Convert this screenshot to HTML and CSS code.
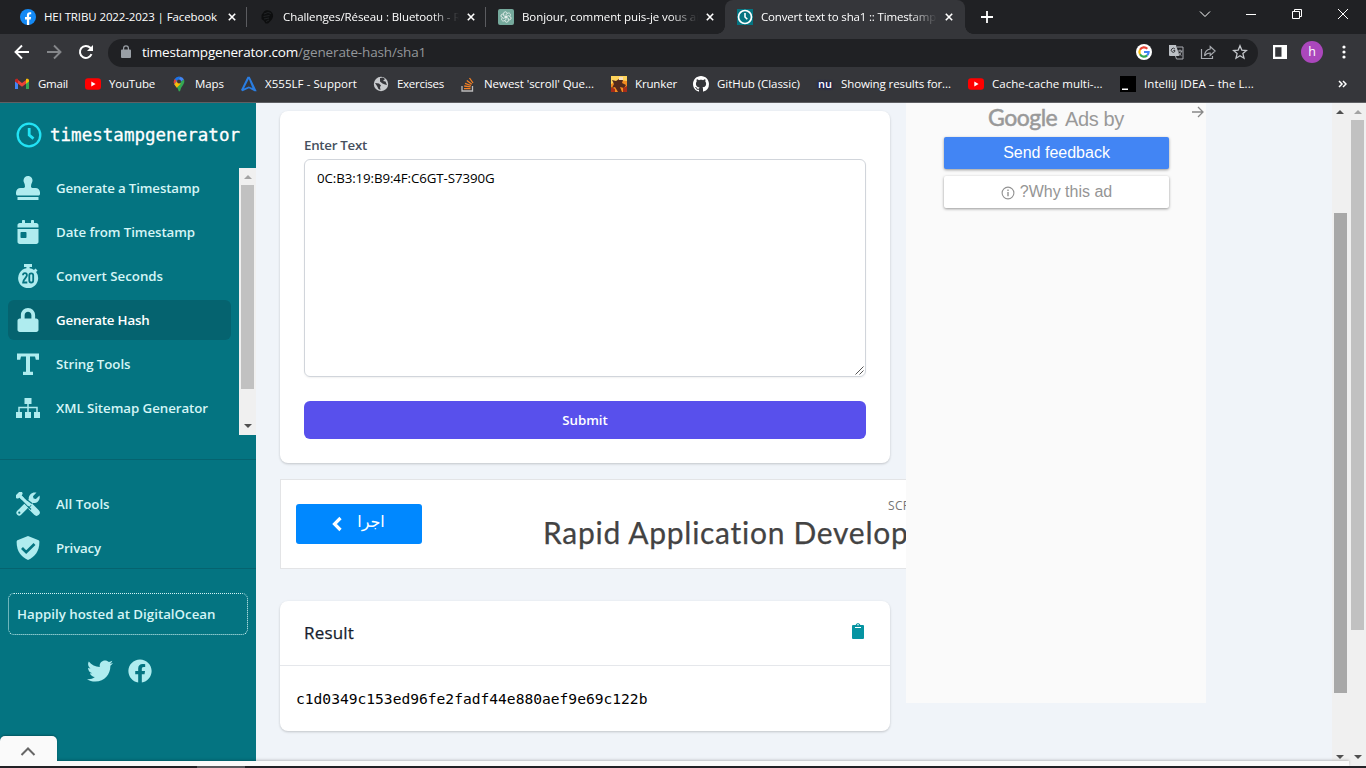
FILE: index.html
```html
<!DOCTYPE html>
<html lang="en">
<head>
<meta charset="utf-8">
<title>Convert text to sha1 :: Timestamp Generator</title>
<link rel="stylesheet" href="styles.css">
</head>
<body>
<div class="chrome">
  <div class="tabs">
    <div class="tab">
      <svg class="fav" viewBox="0 0 16 16"><circle cx="8" cy="8" r="8" fill="#1489f4"/><path d="M6.9 16v-5.5H5V8.1h1.9V6.5c0-2.1 1.1-3.2 3-3.2.7 0 1.3.1 1.3.1v1.9h-.9c-.9 0-1.2.5-1.2 1.2v1.6h2l-.4 2.4H9.200V16z" fill="#fff"/></svg>
      <span class="tab-title t-fb">HEI TRIBU 2022-2023 | Facebook</span>
      <svg class="x" viewBox="0 0 8 8"><path d="M.8.8l6.400 6.400M7.200.8L.8 7.200"/></svg>
    </div>
    <div class="tab">
      <svg class="fav" viewBox="0 0 16 16"><path d="M5 2.500C7 .8 11 .8 13 3.500s1 6-1 8l-3 3H6.500L5 12 2.500 10V6z" fill="#0d0e0f"/><path d="M5 5l4-1.500 3 1M4.500 7.500l6-1M5 10l5-1M7 12.500l3-1.500" stroke="#26282b" fill="none" stroke-width=".8"/></svg>
      <span class="tab-title t-ch fade">Challenges/Réseau : Bluetooth - Root Me</span>
      <svg class="x" viewBox="0 0 8 8"><path d="M.8.8l6.400 6.400M7.200.8L.8 7.200"/></svg>
    </div>
    <div class="tab last">
      <svg class="fav" viewBox="0 0 16 16"><rect width="16" height="16" rx="2" fill="#75a99c"/><g fill="none" stroke="#fff" stroke-width=".8" transform="translate(1.200 1.200) scale(.85)"><path id="p" d="M8 8.200V4.800l2.600-1.500c2.200-.4 3.300 1.800 2.200 3.400"/><use href="#p" transform="rotate(60 8 8)"/><use href="#p" transform="rotate(120 8 8)"/><use href="#p" transform="rotate(180 8 8)"/><use href="#p" transform="rotate(240 8 8)"/><use href="#p" transform="rotate(300 8 8)"/></g></svg>
      <span class="tab-title t-bo fade">Bonjour, comment puis-je vous aider</span>
      <svg class="x" viewBox="0 0 8 8"><path d="M.8.8l6.400 6.400M7.200.8L.8 7.200"/></svg>
    </div>
    <div class="tab active">
      <svg class="fav" viewBox="0 0 16 16"><rect width="16" height="16" fill="#047481"/><circle cx="8" cy="8" r="6.500" fill="none" stroke="#fff" stroke-width="1.700"/><path d="M8 4v4l2.300 2.300" fill="none" stroke="#fff" stroke-width="1.600"/></svg>
      <span class="tab-title t-ts fade">Convert text to sha1 :: Timestamp Generator</span>
      <svg class="x" viewBox="0 0 8 8"><path d="M.8.8l6.400 6.400M7.200.8L.8 7.200"/></svg>
    </div>
    <svg class="plus" viewBox="0 0 12 12"><path d="M6 0v12M0 6h12" stroke="#fff" stroke-width="1.800"/></svg>
    <div class="window-buttons">
      <svg width="12" height="12" viewBox="0 0 12 12"><path d="M1 3.500l5 5 5-5"/></svg>
      <svg width="12" height="12" viewBox="0 0 12 12"><path d="M1 6.500h10"/></svg>
      <svg width="12" height="12" viewBox="0 0 12 12"><path d="M1.500 3.500h7v7h-7zM3.500 3.500v-2h7v7h-2"/></svg>
      <svg width="12" height="12" viewBox="0 0 12 12"><path d="M1 1l10 10M11 1L1 11"/></svg>
    </div>
  </div>

  <div class="toolbar">
    <div class="nav-buttons">
      <svg width="16" height="16" viewBox="0 0 16 16"><path d="M15 8H2M8 1.500L1.500 8 8 14.500" fill="none" stroke="#fff" stroke-width="1.900"/></svg>
      <svg width="16" height="16" viewBox="0 0 16 16"><path d="M1 8h13M8 1.500L14.500 8 8 14.500" fill="none" stroke="#85878a" stroke-width="1.900"/></svg>
      <svg width="16" height="16" viewBox="0 0 16 16"><path d="M13.500 10.200A6 6 0 1 1 12.300 3.800L14 5.500" fill="none" stroke="#fff" stroke-width="2"/><path d="M15 1v6H9z" fill="#fff"/></svg>
    </div>
    <div class="omnibox">
      <svg class="lock" viewBox="0 0 10 13"><path d="M9 4.500H8V3.200a3 3 0 0 0-6 0v1.300H1a1 1 0 0 0-1 1V12a1 1 0 0 0 1 1h8a1 1 0 0 0 1-1V5.500a1 1 0 0 0-1-1zM3.200 3.200a1.800 1.800 0 0 1 3.600 0v1.300H3.200z" fill="#9aa0a6"/></svg>
      <span class="url"><span class="host">timestampgenerator.com</span><span class="path">/generate-hash/sha1</span></span>
      <div class="omni-icons">
        <svg width="16" height="16" viewBox="0 0 16 16"><circle cx="8" cy="8" r="8" fill="#fff"/><g fill="none" stroke-width="2.200"><path d="M4 5.700A4.600 4.600 0 0 1 11.300 4.700" stroke="#ea4335"/><path d="M4 10.300a4.600 4.600 0 0 1 0-4.600" stroke="#fbbc05"/><path d="M11.100 11.400A4.600 4.600 0 0 1 4 10.300" stroke="#34a853"/><path d="M8 8h4.600a4.600 4.600 0 0 1-1.500 3.400" stroke="#4285f4"/></g></svg>
        <svg width="16" height="16" viewBox="0 0 16 16"><path d="M1 1h7l3.500 11H2a1 1 0 0 1-1-1z" fill="#bdc1c6"/><path d="M7 5.200A2 2 0 1 0 7 7.300V6.600H5.300" fill="none" stroke="#35363a" stroke-width="1"/><path d="M9 3h6v12H8.500l-1-3M9.500 7h5M12 5.500V7m1.500 0c-.5 2-1.500 3.500-3 4.500m0-3c.8 1.200 1.800 2.300 3 3.200" fill="none" stroke="#a8abb0" stroke-width="1"/></svg>
        <svg width="16" height="16" viewBox="0 0 16 16"><path d="M1.500 5v9.500h11V12M10.200 2.500l5 4.500-5 4.500V9C7.500 9 5.800 9.800 4.500 11.800 4.800 8 6.500 5.500 10.200 5z" fill="none" stroke="#a8abb0" stroke-width="1.200"/></svg>
        <svg width="16" height="16" viewBox="0 0 16 16"><path d="M8 1.800l1.800 4.300 4.700.4-3.600 3.100 1.100 4.600L8 11.800l-4 2.400 1.100-4.600L1.500 6.500l4.700-.4z" fill="none" stroke="#c4c7cb" stroke-width="1.300"/></svg>
      </div>
    </div>
    <svg class="panel" viewBox="0 0 14 14"><path d="M0 0h14v14H0zM2.200 2.200v9.600H8.500V2.200z" fill="#fff" fill-rule="evenodd"/></svg>
    <div class="avatar">h</div>
    <svg class="dots" viewBox="0 0 4 14"><circle cx="2" cy="2" r="1.600"/><circle cx="2" cy="7" r="1.600"/><circle cx="2" cy="12" r="1.600"/></svg>
  </div>

  <div class="bookmarks">
    <div class="bm gmail"><svg viewBox="0 0 16 16"><path d="M1 3.500v9.500h3V6z" fill="#4285f4"/><path d="M15 3.500v9.500h-3V6z" fill="#34a853"/><path d="M4 4v3.800l4 3 4-3V4L8 7z" fill="#ea4335"/><path d="M1 4.500C1 2.500 3 2.300 4 3v4.800L1 5.600z" fill="#c5221f"/><path d="M15 4.500c0-2-2-2.200-3-1.500v4.800l3-2.200z" fill="#fbbc04"/></svg><span>Gmail</span></div>
    <div class="bm yt"><svg viewBox="0 0 16 16"><rect y="2.200" width="16" height="11.600" rx="3" fill="#f00"/><path d="M6.300 5.500v5l4.300-2.500z" fill="#fff"/></svg><span>YouTube</span></div>
    <div class="bm maps"><svg viewBox="0 0 16 16"><path d="M3.600 3A5.500 5.500 0 0 1 9.500.700L4 7.500z" fill="#1a73e8"/><path d="M3.600 3L6 5 3.300 8.300A5.500 5.500 0 0 1 3.600 3z" fill="#ea4335"/><path d="M9.500.7A5.500 5.500 0 0 1 13 3.500L4.500 10 3.300 8.300z" fill="#4285f4"/><path d="M13 3.500c1.500 4.500-2.500 6-3.600 10.500-.4 1.800-1.800 2-2 .3C7 12 5.500 11 4.300 9.700z" fill="#34a853"/><path d="M3.300 8.300L6.500 4.700l3.200 3-4 4z" fill="#fbbc04"/><circle cx="8" cy="5.500" r="2" fill="#35363a"/></svg><span>Maps</span></div>
    <div class="bm asus"><svg viewBox="0 0 16 16"><path d="M6.500.8h2.200l7 14.400h-2.200L8 12.200 1.500 15.200 0 14zM7.800 3L3 12.600l4.800-2.200 3.600 1.600z" fill="#2a7de1" fill-rule="evenodd"/></svg><span>X555LF - Support</span></div>
    <div class="bm ex"><svg viewBox="0 0 16 16"><circle cx="8" cy="8" r="7.200" fill="#c8cacd"/><path d="M2 7l4 .5 2 2-1 1.500.5 3-2-1L4 10zM7 2l3-.5 2 1.500-2 2 2.500.5L14 9l-2-.5-2.500-1L7 5.500z" fill="#35363a"/></svg><span>Exercises</span></div>
    <div class="bm so"><svg viewBox="0 0 16 16"><path d="M2 10v5h10.500v-5" fill="none" stroke="#bcbbbb" stroke-width="1.300"/><path d="M4 12.700h6.500M4.200 10l6.400.9M5 7.300l6 2.200M6.800 4.500l5 3.700M9.500 2l3.500 5" stroke="#f48024" stroke-width="1.300"/></svg><span>Newest 'scroll' Que...</span></div>
    <div class="bm kr"><svg viewBox="0 0 16 16"><path d="M0 0h16v16H0z" fill="#f28c20"/><path d="M0 0h16v5L9 4 0 8z" fill="#ffd45b"/><path d="M1 4l4 1 3-2 4 1-1 3 4 2-2 3-4-1 2 5H7l-3-5-3 1 2-4z" fill="#51291d"/><path d="M8 1h4v3H8z" fill="#f7e0bd"/><path d="M0 11l4 2v3H0zM12 12l4-2v6h-4z" fill="#a72d18"/></svg><span>Krunker</span></div>
    <div class="bm gh"><svg viewBox="0 0 16 16"><path fill="#fff" d="M8 0C3.580 0 0 3.580 0 8c0 3.540 2.290 6.530 5.470 7.590.4.070.55-.17.55-.38 0-.19-.01-.82-.01-1.490-2.010.37-2.530-.49-2.690-.94-.09-.23-.48-.94-.82-1.130-.28-.15-.68-.52-.01-.53.63-.01 1.080.58 1.230.82.72 1.210 1.870.87 2.330.66.07-.52.28-.87.51-1.070-1.780-.2-3.640-.89-3.640-3.950 0-.87.31-1.590.82-2.150-.08-.2-.36-1.020.08-2.120 0 0 .67-.21 2.200.82.64-.18 1.320-.27 2-.27s1.360.09 2 .27c1.530-1.040 2.200-.82 2.200-.82.44 1.100.16 1.920.08 2.120.51.56.82 1.270.82 2.150 0 3.070-1.870 3.750-3.650 3.950.29.25.54.73.54 1.480 0 1.070-.01 1.930-.01 2.200 0 .21.15.46.55.38A8.013 8.013 0 0 0 16 8c0-4.420-3.580-8-8-8z"/></svg><span>GitHub (Classic)</span></div>
    <div class="bm nu"><b>nu</b><span>Showing results for...</span></div>
    <div class="bm cc"><svg viewBox="0 0 16 16"><rect y="2.200" width="16" height="11.600" rx="3" fill="#f00"/><path d="M6.300 5.500v5l4.300-2.500z" fill="#fff"/></svg><span>Cache-cache multi-...</span></div>
    <div class="bm ij"><svg viewBox="0 0 16 16"><path d="M0 0h16v16H0z"/><path d="M2 12.500h6V14H2z" fill="#fff"/></svg><span>IntelliJ IDEA – the L...</span></div>
    <svg class="more" viewBox="0 0 9 8"><path d="M1 1l3 3-3 3M5 1l3 3-3 3" fill="none" stroke="#fff" stroke-width="1.500"/></svg>
  </div>
</div>

<div class="view">
  <div class="frame">
    <div class="app">
      <aside class="sidebar">
        <div class="logo">
          <svg viewBox="0 0 26 26"><g fill="none" stroke="#22e3f5"><circle cx="13" cy="13" r="11.300" stroke-width="2.300"/><path d="M13.200 6v7l4.300 3.600" stroke-width="2.800"/></g></svg>
          <span>timestampgenerator</span>
        </div>
        <div class="nav-scroll">
          <nav>
            <a class="item a1"><svg viewBox="0 0 512 512"><path d="M32 512h448v-64H32v64zm384-256h-66.560c-16.260 0-29.440-13.180-29.440-29.440v-9.460c0-27.370 8.880-53.410 21.460-77.720 9.110-17.610 12.900-38.390 9.050-60.420-6.770-38.780-38.470-70.700-77.260-77.450C212.620-9.040 160 37.330 160 96c0 14.160 3.120 27.540 8.690 39.580C182.020 164.430 192 194.700 192 226.490v.07c0 16.260-13.180 29.440-29.440 29.440H96c-53.020 0-96 42.980-96 96v32c0 17.670 14.330 32 32 32h448c17.670 0 32-14.330 32-32v-32c0-53.020-42.980-96-96-96z"/></svg>Generate a Timestamp</a>
            <a class="item a2"><svg viewBox="0 0 448 512"><path fill-rule="evenodd" d="M0 464c0 26.500 21.500 48 48 48h352c26.500 0 48-21.500 48-48V192H0v272zm64-192c0-8.800 7.200-16 16-16h96c8.800 0 16 7.200 16 16v96c0 8.800-7.200 16-16 16H80c-8.800 0-16-7.200-16-16v-96zM400 64h-48V16c0-8.800-7.200-16-16-16h-32c-8.800 0-16 7.200-16 16v48H160V16c0-8.800-7.200-16-16-16h-32c-8.800 0-16 7.200-16 16v48H48C21.500 64 0 85.500 0 112v48h448v-48c0-26.500-21.500-48-48-48z"/></svg>Date from Timestamp</a>
            <a class="item a3"><svg viewBox="0 0 24 24"><path d="M8 0h8v3h-2.400v1.300A10 10 0 0 1 18 6l1.500-1.500 2 2-1.400 1.600A10 10 0 1 1 10.400 4.300V3H8z"/><path d="M7 11.300c0-2.800 3.900-2.800 3.900 0 0 2.200-3.800 3.700-3.800 7.200h4.200M13.300 11.300c0-2.700 3.900-2.700 3.900 0v5.200c0 2.700-3.900 2.700-3.900 0z" fill="none" stroke="#047481" stroke-width="1.800"/></svg>Convert Seconds</a>
            <a class="item a4 current"><svg viewBox="0 0 448 512"><path d="M400 224h-24v-72C376 68.200 307.800 0 224 0S72 68.200 72 152v72H48c-26.500 0-48 21.500-48 48v192c0 26.500 21.500 48 48 48h352c26.500 0 48-21.500 48-48V272c0-26.500-21.500-48-48-48zm-104 0H152v-72c0-39.700 32.300-72 72-72s72 32.300 72 72v72z"/></svg>Generate Hash</a>
            <a class="item a5"><svg viewBox="0 0 24 24"><path d="M1 1.500h22v6.200h-3.200L19 4.500h-5v15.200h3V23H7v-3.300h3V4.500H5l-.8 3.200H1z"/></svg>String Tools</a>
            <a class="item a6"><svg viewBox="0 0 24 24"><path d="M8.500 2h7v6h-7zM0 16h6v6H0zM9 16h6v6H9zM18 16h6v6h-6z"/><path d="M12 8v8M3 16v-4.500h18V16" fill="none" stroke="#afecef" stroke-width="1.500"/></svg>XML Sitemap Generator</a>
          </nav>
          <div class="bar light"><i class="up pale"></i><i class="thumb"></i><i class="down"></i></div>
        </div>
        <nav class="second">
          <a class="item a7"><svg viewBox="0 0 24 24"><path d="M1.500 4.500L4.500 1.500" stroke-width="4" stroke="#afecef" stroke-linecap="round"/><path d="M4 4l8.500 8.500" stroke="#afecef" stroke-width="3"/><path d="M14.800 14.800l5.700 5.700" stroke="#afecef" stroke-width="6.500" stroke-linecap="round"/><path d="M2.900 21.100L13 11" stroke="#047481" stroke-width="7"/><path d="M3.200 20.800L15 9" stroke="#afecef" stroke-width="5.500" stroke-linecap="round"/><path d="M20.500.6L17 4.200l.6 2.300 2.300.6L23.500 3.500c1.200 4.800-3 8.600-7.600 7.300L13 8.200C11.700 3.500 15.700-.6 20.500.6z"/><circle cx="3.300" cy="20.700" r="1.100" fill="#047481"/><path d="M5.500 8L15 17.500M8 5.500l8 6" stroke="#047481" stroke-width="1.200"/><path d="M4 4l9 9" stroke="#afecef" stroke-width="3"/></svg>All Tools</a>
          <a class="item a8"><svg viewBox="0 0 24 24"><path d="M12 0l10 4.100c.9.400 1.400 1.100 1.400 2C23.400 15 19 21 12 24 5.500 21.500.6 15.500.6 6.100c0-.9.5-1.600 1.400-2z"/><path d="M6 12l4.200 4.200L18.500 8" fill="none" stroke="#047481" stroke-width="2.700"/></svg>Privacy</a>
        </nav>
        <a class="hosted">Happily hosted at DigitalOcean</a>
        <div class="social">
          <svg width="26" height="26" viewBox="0 0 512 512"><path d="M459.370 151.716c.325 4.548.325 9.097.325 13.645 0 138.720-105.583 298.558-298.558 298.558-59.452 0-114.680-17.219-161.137-47.106 8.447.974 16.568 1.299 25.340 1.299 49.055 0 94.213-16.568 130.274-44.832-46.132-.975-84.792-31.188-98.112-72.772 6.498.974 12.995 1.624 19.818 1.624 9.421 0 18.843-1.300 27.614-3.573-48.081-9.747-84.143-51.980-84.143-102.985v-1.299c13.969 7.797 30.214 12.670 47.431 13.319-28.264-18.843-46.781-51.005-46.781-87.391 0-19.492 5.197-37.360 14.294-52.954 51.655 63.675 129.300 105.258 216.365 109.807-1.624-7.797-2.599-15.918-2.599-24.040 0-57.828 46.782-104.934 104.934-104.934 30.213 0 57.502 12.670 76.670 33.137 23.715-4.548 46.456-13.320 66.599-25.340-7.798 24.366-24.366 44.833-46.132 57.827 21.117-2.273 41.584-8.122 60.426-16.243-14.292 20.791-32.161 39.308-52.628 54.253z"/></svg>
          <svg width="24" height="24" viewBox="0 0 512 512"><path d="M504 256C504 119 393 8 256 8S8 119 8 256c0 123.780 90.690 226.380 209.250 245V327.690h-63V256h63v-54.640c0-62.150 37-96.480 93.670-96.480 27.140 0 55.520 4.840 55.520 4.840v61h-31.280c-30.800 0-40.410 19.120-40.410 38.730V256h68.780l-11 71.690h-57.780V501C413.310 482.380 504 379.780 504 256z"/></svg>
        </div>
      </aside>

      <main>
        <div class="col">
          <section class="card form">
            <label>Enter Text</label>
            <div class="textarea">0C:B3:19:B9:4F:C6GT-S7390G<svg viewBox="0 0 9 9"><path d="M.5 8.500l8-8M4.500 8.500l4-4" stroke="#555" fill="none"/></svg></div>
            <button>Submit</button>
          </section>
          <section class="banner">
            <div class="cta"><svg viewBox="0 0 10 16"><path d="M8.500 2L2.500 8l6 6" fill="none" stroke="#fff" stroke-width="3.200"/></svg><span dir="rtl">اجرا</span></div>
            <div class="banner-text"><div class="brand">SCREEN</div><div class="headline">Rapid Application Development</div></div>
          </section>
          <section class="card result">
            <header><h2>Result</h2><svg viewBox="0 0 12 16"><path d="M1 2h2.700C4.200-.3 7.800-.3 8.300 2H11a1 1 0 0 1 1 1v12a1 1 0 0 1-1 1H1a1 1 0 0 1-1-1V3a1 1 0 0 1 1-1z" fill="#0694a2"/><path d="M3 4.500h6" stroke="#fff"/><circle cx="6" cy="1.800" r=".8" fill="#fff"/></svg></header>
            <pre>c1d0349c153ed96fe2fadf44e880aef9e69c122b</pre>
          </section>
        </div>
        <aside class="ads">
          <div class="ads-head"><span class="google">Google</span><span class="adsby">Ads by</span></div>
          <svg class="arrow" viewBox="0 0 12 12"><path d="M0 6h10.500M6 1l5 5-5 5" fill="none" stroke="#888" stroke-width="1.300"/></svg>
          <div class="ad-btn blue">Send feedback</div>
          <div class="ad-btn"><svg viewBox="0 0 14 14"><circle cx="7" cy="7" r="5.900" fill="none" stroke="#929292" stroke-width="1.100"/><path d="M7 6v4.300M7 3.600v1.300" stroke="#929292" stroke-width="1.400"/></svg>?Why this ad</div>
        </aside>
      </main>
      <div class="bar inner"><i class="up"></i><i class="thumb"></i><i class="down"></i></div>
    </div>
    <div class="anchor"></div>
    <div class="collapse"><svg viewBox="0 0 16 9"><path d="M1.500 8L8 1.500 14.500 8" fill="none" stroke="#666" stroke-width="2"/></svg></div>
  </div>
  <div class="bar outer"><i class="up pale"></i><i class="thumb"></i><i class="down"></i></div>
</div>
<div class="taskbar"><i></i></div>
</body>
</html>
```

FILE: styles.css
```css
* { box-sizing: border-box; }
body { margin: 0; width: 1366px; height: 768px; overflow: hidden; display: flex; flex-direction: column; font-family: "Open Sans", "Noto Sans", sans-serif; }
svg { display: block; flex: none; }

/* browser chrome */
.chrome { flex: none; height: 103px; background: #35363a; border-bottom: 1px solid #5f6064; color: #fff; }
.tabs { display: flex; height: 34px; background: #202124; padding-left: 8px; align-items: stretch; }
.tab { position: relative; display: flex; align-items: center; width: 239px; padding-left: 12px; }
.tab:not(.last):not(.active)::after { content: ""; position: absolute; right: 0; top: 7px; height: 20px; width: 1px; background: #5b5c60; }
.tab .fav { width: 16px; height: 16px; margin-right: 8px; }
.tab-title { width: 176px; font-size: 11.5px; line-height: 16px; white-space: nowrap; overflow: hidden; }
.fade { -webkit-mask-image: linear-gradient(90deg, #000 148px, transparent 176px); mask-image: linear-gradient(90deg, #000 148px, transparent 176px); }
.t-fb { letter-spacing: -.11px; }
.t-ch { letter-spacing: -.08px; }
.t-bo { letter-spacing: -.07px; }
.t-ts { letter-spacing: -.16px; }
.x { width: 8px; height: 8px; margin-left: 8px; stroke: #fff; stroke-width: 1.600; }
.active { width: 240px; background: #35363a; border-radius: 8px 8px 0 0; }
.active::before, .active::after { content: ""; position: absolute; bottom: 0; width: 8px; height: 8px; }
.active::before { left: -8px; background: radial-gradient(circle at 0 0, transparent 7.500px, #35363a 8px); }
.active::after { right: -8px; background: radial-gradient(circle at 100% 0, transparent 7.500px, #35363a 8px); }
.plus { width: 12px; height: 12px; margin: 11px 0 0 16px; }
.window-buttons { margin-left: auto; display: flex; gap: 34px; padding: 8px 17px 0 0; }
.window-buttons path { fill: none; stroke: #fff; stroke-width: 1; }

.toolbar { height: 36px; display: flex; align-items: center; padding: 0 0 0 14px; }
.nav-buttons { display: flex; gap: 16px; width: 94px; }
.omnibox { width: 1150px; height: 28px; border-radius: 14px; background: #202124; display: flex; align-items: center; padding: 0 10px 2px 13px; margin-top: 1px; }
.lock { width: 10px; height: 13px; margin-right: 11px; }
.url { font-size: 13.500px; line-height: 20px; white-space: nowrap; }
.host { letter-spacing: -.21px; }
.path { letter-spacing: -.15px; color: #94979b; }
.omni-icons { margin-left: auto; display: flex; gap: 16px; }
.panel { width: 14px; height: 14px; margin-left: 15px; }
.avatar { width: 22px; height: 22px; margin-left: 14px; border-radius: 50%; background: #ab47bc; font-size: 12.500px; line-height: 21px; text-align: center; }
.dots { width: 4px; height: 14px; margin-left: 19px; fill: #fff; }

.bookmarks { height: 28px; display: flex; align-items: center; padding-left: 14px; font-size: 11.500px; }
.bm { display: flex; align-items: center; flex: none; gap: 8px; white-space: nowrap; }
.bm svg { width: 16px; height: 16px; }
.bm span { padding-bottom: 2px; }
.gmail { width: 71px; letter-spacing: -.24px; }
.yt { width: 86px; letter-spacing: -.18px; }
.maps { width: 70px; letter-spacing: -.06px; }
.asus { width: 132px; letter-spacing: .05px; }
.ex { width: 87px; letter-spacing: -.27px; }
.so { width: 151px; letter-spacing: -.05px; }
.kr { width: 82px; letter-spacing: -.15px; }
.gh { width: 124px; letter-spacing: -.04px; }
.nu { width: 151px; letter-spacing: -.1px; }
.nu b { width: 16px; padding-left: 1px; font-weight: 600; font-size: 11px; line-height: 14px; letter-spacing: 0; text-shadow: 0 0 3px #1717a0, 0 0 2px #000; }
.cc { width: 152px; }
.ij { width: 218px; letter-spacing: .07px; }
.more { width: 9px; height: 8px; }

/* page */
.view { height: 663px; display: flex; }
.frame { position: relative; width: 1349px; display: flex; flex-direction: column; }
.app { height: 658px; display: flex; background: #f0f4f9; }
.anchor { height: 5px; background: #fafafa; box-shadow: 0 -1px 3px rgba(0,0,0,.22); position: relative; }
.collapse { position: absolute; left: 0; bottom: 3px; width: 57px; height: 27px; background: #fafafa; border-radius: 5px 5px 0 0; box-shadow: 0 -1px 2px rgba(0,0,0,.25); clip-path: inset(-4px -4px 2px 0); display: flex; justify-content: center; padding: 11px 1px 0 0; }
.collapse svg { width: 16px; height: 9px; }
.taskbar { height: 2px; background: #232227; display: flex; padding-left: 197px; }
.taskbar i { width: 48px; background: #5b5a5e; }

.sidebar { width: 256px; flex: none; background: #047481; color: #d5f5f6; font-weight: 600; font-size: 13.300px; }
.logo { display: flex; align-items: center; height: 65px; padding: 0 0 1px 16px; }
.logo svg { width: 26px; height: 26px; margin-right: 8px; }
.logo span { padding-bottom: 1px; font: 17.500px "DejaVu Sans Mono", monospace; color: #fff; letter-spacing: .02px; -webkit-text-stroke: .3px #fff; }
.nav-scroll { display: flex; height: 267px; overflow: hidden; }
.nav-scroll nav { width: 239px; padding: 0 8px; }
.item { display: flex; align-items: center; height: 40px; margin-bottom: 4px; padding-left: 8px; border-radius: 6px; white-space: nowrap; }
.item svg { width: 24px; height: 24px; margin-right: 16px; fill: #afecef; }
.current { background: #05636f; color: #fff; }
.a1 { letter-spacing: -.14px; }
.a2 { letter-spacing: -.085px; }
.a4 { letter-spacing: -.18px; }
.a5, .a6 { letter-spacing: -.06px; }
.a8 { letter-spacing: -.165px; }
.second { margin-top: 24px; border: solid #05636f; border-width: 1px 0; height: 110px; padding: 24px 8px 0; }
.second .a8 { margin-bottom: 0; }
.hosted { display: flex; align-items: center; margin: 24px 8px 0; height: 42px; border: 1px dotted #d5f5f6; border-radius: 6px; padding-left: 8px; }
.social { display: flex; justify-content: center; align-items: center; gap: 15px; margin-top: 23px; padding-right: 18px; fill: #afecef; }

main { flex: 1; display: flex; padding-left: 22px; overflow: hidden; }
.col { flex: none; width: 628px; padding: 8px 0 0 2px; overflow: hidden; }
.card { width: 610px; background: #fff; border-radius: 8px; box-shadow: 0 1px 3px rgba(0,0,0,.12), 0 1px 2px rgba(0,0,0,.08); }
.form { height: 352px; padding: 24px; }
.form label { display: block; font-weight: 600; font-size: 13.300px; line-height: 20px; letter-spacing: -.27px; color: #46505e; }
.textarea { position: relative; height: 218px; margin: 4px 0 24px; border: 1px solid #d1d5db; border-radius: 6px; padding: 8px 12px; font-size: 13.300px; line-height: 20px; letter-spacing: -.1px; box-shadow: 0 1px 2px rgba(0,0,0,.06); }
.textarea svg { position: absolute; right: 1px; bottom: 1px; width: 9px; height: 9px; }
.form button { display: block; width: 100%; height: 38px; border: 0; border-radius: 6px; background: #5850ec; color: #fff; font: 600 13.300px "Open Sans", sans-serif; }
.banner { width: 728px; height: 90px; margin: 16px 0 32px; background: #fff; border: 1px solid #e3e4e6; display: flex; }
.cta { width: 126px; height: 40px; margin: 24px 0 0 15px; border-radius: 3px; background: #0088ff; color: #fff; display: flex; justify-content: center; gap: 15px; padding-right: 1px; font: 16px/36px "DejaVu Sans", sans-serif; }
.cta svg { width: 10px; height: 16px; margin-top: 12px; }
.banner-text { margin-left: 121px; white-space: nowrap; font-family: Lato, sans-serif; }
.brand { font: 12px/16px "Open Sans", sans-serif; letter-spacing: .3px; color: #757575; margin: 18px 0 0 345px; }
.headline { font-size: 30px; line-height: 37px; letter-spacing: .72px; color: #434343; -webkit-text-stroke: .25px #434343; }
.result { height: 130px; }
.result header { display: flex; justify-content: space-between; height: 65px; padding: 22px 26px 0 24px; border-bottom: 1px solid #e5e7eb; }
.result h2 { margin: -1px 0 0; font-size: 17px; font-weight: 500; line-height: 22px; letter-spacing: .18px; color: #161e2e; -webkit-text-stroke: .25px #161e2e; }
.result header svg { width: 12px; height: 16px; }
.result pre { margin: 0; padding: 22px 16px 0; font: 14.600px/22px "DejaVu Sans Mono", monospace; color: #000; }
.ads { position: relative; width: 300px; height: 600px; background: #fafafa; padding: 3px 37px 0 38px; flex: none; }
.ads-head { height: 31px; display: flex; align-items: flex-start; padding-left: 44px; color: #999; white-space: nowrap; }
.google { width: 77px; font: 23px/22px Lato, sans-serif; letter-spacing: -.5px; -webkit-text-stroke: .5px #999; }
.adsby { font: 20px/26px "Liberation Sans", sans-serif; letter-spacing: -.4px; }
.arrow { position: absolute; right: 2px; top: 3px; width: 12px; height: 12px; }
.ad-btn { height: 32px; margin-bottom: 7px; border-radius: 2px; background: #fff; color: #959595; font: 16px/32px "Liberation Sans", sans-serif; display: flex; justify-content: center; align-items: center; box-shadow: 0 1px 3px rgba(0,0,0,.4); }
.ad-btn svg { width: 14px; height: 14px; margin-right: 5px; margin-top: 2px; }
.blue { background: #4285f4; color: #fff; }

/* scrollbars */
.bar { width: 17px; flex: none; background: #f0f0f0; display: flex; flex-direction: column; align-items: center; }
.thumb { width: 13px; background: #c1c1c1; }
.up { border: 4px solid transparent; border-top: 0; border-bottom-color: #505050; margin-top: 7px; }
.down { border: 4px solid transparent; border-bottom: 0; border-top-color: #505050; margin: auto 0 7px; }
.pale { border-bottom-color: #a3a3a3; }
.light .thumb { height: 204px; margin-top: 6px; }
.inner { padding-right: 1px; }
.inner .thumb { height: 480px; margin-top: 99px; background: #a8a8a8; }
.inner .down { margin-bottom: 2px; }
.outer .thumb { height: 510px; margin-top: 6px; }
```
